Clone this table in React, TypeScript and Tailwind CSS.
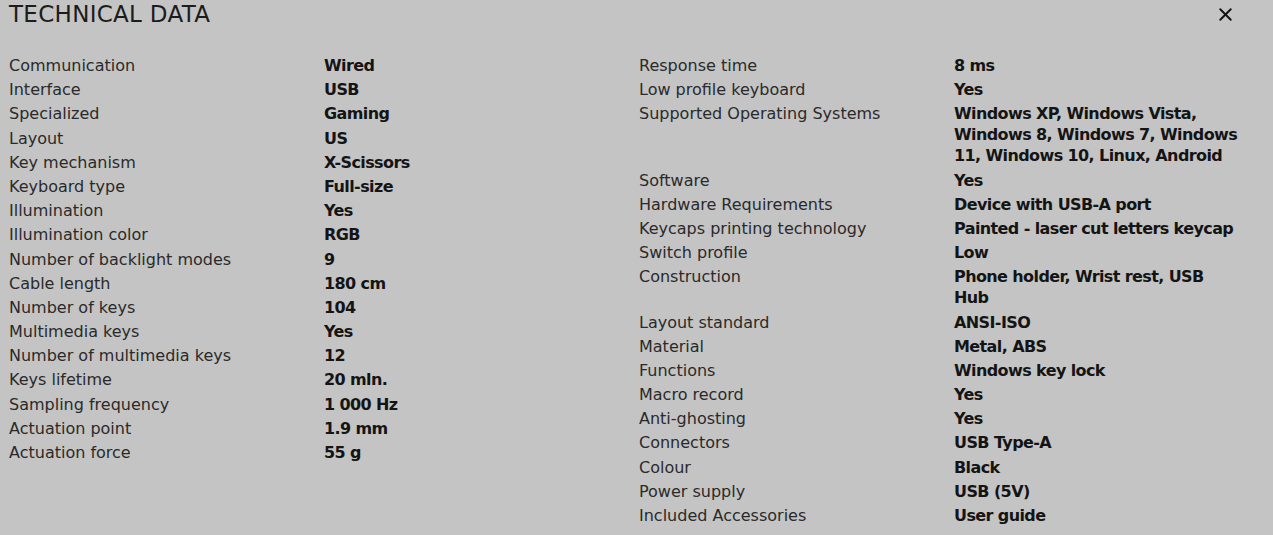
import { X } from "lucide-react";

const left: [string, string][] = [
  ["Communication", "Wired"],
  ["Interface", "USB"],
  ["Specialized", "Gaming"],
  ["Layout", "US"],
  ["Key mechanism", "X-Scissors"],
  ["Keyboard type", "Full-size"],
  ["Illumination", "Yes"],
  ["Illumination color", "RGB"],
  ["Number of backlight modes", "9"],
  ["Cable length", "180 cm"],
  ["Number of keys", "104"],
  ["Multimedia keys", "Yes"],
  ["Number of multimedia keys", "12"],
  ["Keys lifetime", "20 mln."],
  ["Sampling frequency", "1 000 Hz"],
  ["Actuation point", "1.9 mm"],
  ["Actuation force", "55 g"],
];

const right: [string, string][] = [
  ["Response time", "8 ms"],
  ["Low profile keyboard", "Yes"],
  [
    "Supported Operating Systems",
    "Windows XP, Windows Vista, Windows 8, Windows 7, Windows 11, Windows 10, Linux, Android",
  ],
  ["Software", "Yes"],
  ["Hardware Requirements", "Device with USB-A port"],
  ["Keycaps printing technology", "Painted - laser cut letters keycap"],
  ["Switch profile", "Low"],
  ["Construction", "Phone holder, Wrist rest, USB Hub"],
  ["Layout standard", "ANSI-ISO"],
  ["Material", "Metal, ABS"],
  ["Functions", "Windows key lock"],
  ["Macro record", "Yes"],
  ["Anti-ghosting", "Yes"],
  ["Connectors", "USB Type-A"],
  ["Colour", "Black"],
  ["Power supply", "USB (5V)"],
  ["Included Accessories", "User guide"],
];

function SpecList({ rows }: { rows: [string, string][] }) {
  return (
    <dl className="grid grid-cols-[315px_286px] content-start self-start gap-y-[3.2px] text-[16px] leading-[21px]">
      {rows.map(([k, v]) => (
        <div key={k} className="contents">
          <dt className="text-[#2a2a2a]">{k}</dt>
          <dd className="font-bold tracking-[-0.6px] text-[#141414]">{v}</dd>
        </div>
      ))}
    </dl>
  );
}

export default function App() {
  return (
    <div
      className="w-[1273px] h-[535px] bg-[#c4c4c4] overflow-hidden"
      style={{ fontFamily: '"DejaVu Sans", "Liberation Sans", sans-serif' }}
    >
      <div className="flex items-center justify-between pl-[9px] pr-[37px] h-[29px]">
        <h2 className="text-[23px] tracking-[0.3px] text-[#1c1c1c] font-normal">TECHNICAL DATA</h2>
        <X className="w-[21px] h-[21px] text-[#111]" strokeWidth={2.2} />
      </div>
      <div className="grid grid-cols-[630px_1fr] items-start pl-[9px] pt-[26px]">
        <SpecList rows={left} />
        <SpecList rows={right} />
      </div>
    </div>
  );
}
